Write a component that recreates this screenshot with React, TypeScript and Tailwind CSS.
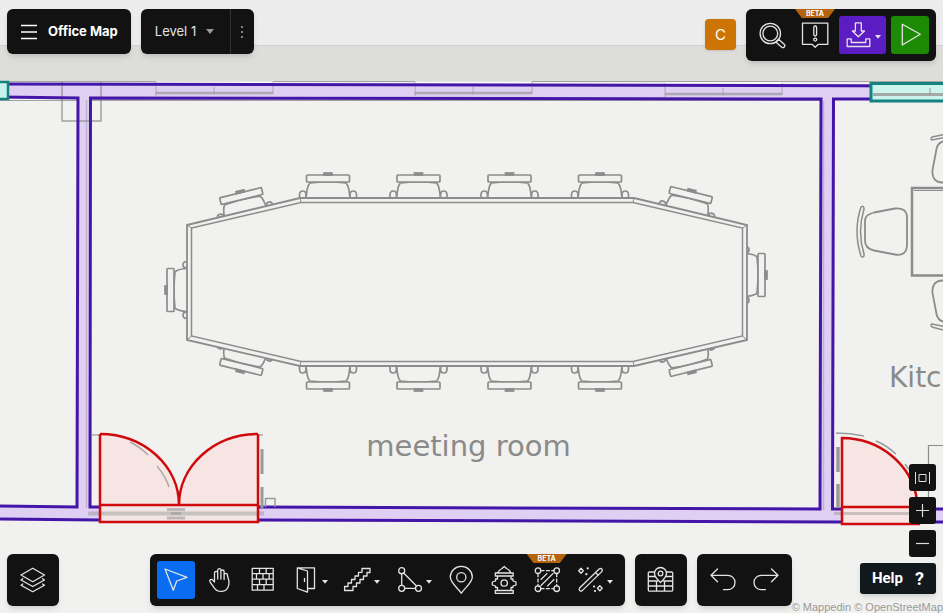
import type { ReactNode } from "react";

const panel = "bg-[#121212] rounded-md shadow-md";

function Icon({ children }: { children: ReactNode }) {
  return (
    <svg
      viewBox="0 0 26 26"
      className="w-[26px] h-[26px] shrink-0 overflow-visible"
      fill="none"
      stroke="currentColor"
      strokeWidth="1.3"
      strokeLinejoin="round"
      strokeLinecap="round"
      aria-hidden="true"
    >
      {children}
    </svg>
  );
}

function Caret() {
  return (
    <svg viewBox="0 0 6 4" className="w-[6px] h-[4px] shrink-0 mt-1" fill="currentColor" aria-hidden="true">
      <path d="M0 0h6L3 3.8z" />
    </svg>
  );
}

function Tool({ label, children, menu, beta, tone = "hover:bg-neutral-800" }: {
  label: string;
  children: ReactNode;
  menu?: boolean;
  beta?: boolean;
  tone?: string;
}) {
  return (
    <button
      type="button"
      aria-label={label}
      className={`relative h-[38px] px-[6px] flex items-center gap-1 rounded-[3px] text-[#e4e4e4] ${menu ? "w-[47px]" : "w-[38px]"} ${tone}`}
    >
      {beta && (
        <span className="absolute -top-[7px] -left-px w-10 h-[9px] bg-[#b4630c] text-white text-[7px] leading-[9px] font-bold text-center [clip-path:polygon(0_0,100%_0,83%_100%,17%_100%)]">
          BETA
        </span>
      )}
      <Icon>{children}</Icon>
      {menu && <Caret />}
    </button>
  );
}

// Origin is the middle of the table edge the chair faces
function Chair({ x, y, turn = 0 }: { x: number; y: number; turn?: number }) {
  return (
    <g transform={`translate(${x} ${y}) rotate(${turn})`} strokeWidth="1.7">
      <path d="M-22 0c1-7 1-13 4-15q18-2 36 0c3 2 3 8 4 15" />
      <path d="M-28.500 0v-3q0-4 3.200-4t3.200 3v4M28.500 0v-3q0-4-3.200-4t-3.200 3v4" />
      <rect x="-21.5" y="-23" width="43" height="7" rx="1" />
      <rect x="-4" y="-25" width="8" height="2" fill="#8c8c8c" />
    </g>
  );
}

function Window({ x, y }: { x: number; y: number }) {
  return (
    <g stroke="#999" strokeOpacity="0.7" fill="none">
      <path d={`M${x} ${y}h117`} stroke="#fff" strokeWidth="2" />
      <path d={`M${x} ${y}v14M${x + 58} ${y + 5}v8M${x + 117} ${y}v12`} strokeWidth="1" />
      <path d={`M${x} ${y + 11}h117`} strokeWidth="2.500" />
    </g>
  );
}

function FloorPlan() {
  return (
    <svg
      viewBox="0 0 943 613"
      preserveAspectRatio="xMidYMid slice"
      className="absolute inset-0 w-full h-full"
      role="img"
      aria-label="Floor plan"
    >
      <rect width="943" height="613" fill="#f1f1ef" />
      <rect width="943" height="46" fill="#ececec" />
      <path d="M0 45H943V82H0z" fill="#dddeda" />
      <path d="M0 45.500H943" stroke="#d2d2d0" />
      <path d="M0 81.500H943" stroke="#a3a3a3" />

      {/* walls */}
      <path
        fillRule="evenodd"
        fill="#decff3"
        d="M-4 84L947 86V522L-4 519zM-4 97L78 98 77 507-4 506zM90.500 98L821 99 820 509 90 507zM833.500 99H947V509H832.500z"
      />
      <g stroke="#8d8d8d" fill="none">
        <path d="M62 82V121H101V82" strokeOpacity="0.8" strokeWidth="1.500" />
        <path d="M0 100.500H77M92 100.500H820" strokeOpacity="0.8" />
        <path d="M86.500 100V508M823.500 101V510" strokeOpacity="0.4" strokeWidth="1.500" />
      </g>
      <Window x={156} y={82} />
      <Window x={415} y={82} />
      <Window x={665} y={83} />
      <g fill="none" stroke="#4416a8" strokeWidth="3">
        <path d="M-4 84L947 86M-4 519L100 520M258 520L842 522M918 522H947" />
        <path d="M-4 97L78 98 77 507-4 506" />
        <path d="M100 507H90L90.500 98 821 99 820 509 258 507" />
        <path d="M842 509H832.500L833.500 99H947M918 509H947" />
      </g>
      <rect x="-6" y="82" width="14" height="17" fill="#c7f1ec" stroke="#16827f" strokeWidth="2.500" />
      <rect x="871" y="83.500" width="90" height="17.500" fill="#cdf3ed" stroke="#16827f" strokeWidth="3" />
      <path d="M873 94.500H943" stroke="#a3a9a7" strokeWidth="3" />
      <path d="M930 88V95" stroke="#999" />

      {/* meeting table */}
      <g fill="#f1f1ef" stroke="#8c8c8c">
        {[328, 418.5, 509.5, 600].map((x) => (
          <g key={x}>
            <Chair x={x} y={198} />
            <Chair x={x} y={366} turn={180} />
          </g>
        ))}
        <Chair x={246} y={215} turn={-14} />
        <Chair x={686} y={214} turn={14} />
        <Chair x={246} y={348} turn={194} />
        <Chair x={686} y={349} turn={166} />
        <Chair x={190} y={290} turn={-90} />
        <Chair x={742} y={275} turn={90} />
        <path d="M187 225L300 198H634L747 225V340L634 366H300L187 340z" strokeWidth="1.800" />
        <path d="M191.500 228L301 202.500H633L742.500 228V336L633 361.500H301L191.500 336z" strokeWidth="1.500" />
        <path d="M187 225l4.500 3M300 198l1 4M634 198l-1 4M747 225l-4.500 3M747 340l-4.500-4M634 366l-1-5M300 366l1-5M187 340l4.500-4" />
      </g>
      <text x="468.500" y="456" textAnchor="middle" fontSize="29" fill="#8a8a8a" fontFamily="'DejaVu Sans', sans-serif">
        meeting room
      </text>

      {/* kitchen */}
      <g fill="none" stroke="#8c8c8c" strokeWidth="1.800">
        <path d="M947 188H912V275.500H947" strokeWidth="2.500" />
        <path d="M914 190.500H947" strokeWidth="1" />
        <path d="M870 214q2-1 4-1.500l21-4q12-1 12 9v27q0 12-12 10l-21-4q-9-2-9-10v-19q0-6 5-7.500z" />
        <path d="M861 207q-8 24 0 49 1 2 3 0v-2q-7-22 0-45 0-4-3-2z" strokeWidth="1.500" />
        <path d="M947 141q-9 0-10.500 8l-4 21q-1 12 10 12.500h5M947 322q-9 0-10.500-8l-4-21q-1-12 10-12.500h5" />
        <path d="M947 134l-15 3q-2 2 0 3l15-3M947 331l-15-4q-2-2 0-3l15 3" strokeWidth="1.500" />
        <path d="M928.500 509V445.500H947" strokeWidth="1.200" />
      </g>
      <text x="889" y="387" fontSize="28" fill="#8a8a8a" fontFamily="'DejaVu Sans', sans-serif">
        Kitc
      </text>

      {/* double door */}
      <path d="M100 434A79 71 0 0 1 179 505A79 71 0 0 1 258 434V505H100z" fill="#f7e5e3" />
      <rect x="100" y="505" width="158" height="17" fill="#f2e6e4" />
      <g fill="none" stroke="#9a9a9a">
        <path d="M92 435h8M258 435h5M130 442q10 5 18 13M157 466q9 11 12 21" strokeOpacity="0.8" strokeWidth="1.500" />
        <path d="M88 513.500H264" strokeWidth="4" strokeOpacity="0.5" />
        <path d="M167 509.500h18M167 518h18M171 513.500h10" strokeWidth="3" strokeOpacity="0.6" />
        <path d="M262 449V474M262 487V508" strokeWidth="3" />
        <path d="M265.500 507V498.500H275V507" strokeWidth="1.500" />
      </g>
      <g fill="none" stroke="#d0090d" strokeWidth="2.500">
        <path d="M100 434V522H258V434M100 505H258" />
        <path d="M100 434A79 71 0 0 1 179 505A79 71 0 0 1 258 434" />
      </g>

      {/* kitchen door */}
      <path d="M842 438A76 72 0 0 1 918 507V523H842z" fill="#f7e5e3" />
      <g fill="none" stroke="#9a9a9a">
        <path d="M836 433q14 0 28 3M876 441q10 4 20 13M905 464l8 11" strokeWidth="1.500" />
        <path d="M838 447V472M838 484V508" strokeWidth="3.500" />
        <path d="M834 513.500H918" strokeWidth="3" strokeOpacity="0.5" />
      </g>
      <g fill="none" stroke="#d0090d" strokeWidth="2.500">
        <path d="M920 524H842V438A76 72 0 0 1 917 500M842 507H918" />
      </g>
    </svg>
  );
}

function Header() {
  return (
    <header className="relative flex items-start justify-between px-[7px] pt-[9px]">
      <div className="flex gap-[10px]">
        <button
          type="button"
          className={`${panel} h-[45px] pl-[14px] pr-[13px] flex items-center gap-[11px] text-[13px] font-bold text-white whitespace-nowrap`}
        >
          <svg viewBox="0 0 16 16" className="w-4 h-4" stroke="currentColor" strokeWidth="1.500" aria-hidden="true">
            <path d="M0 1.500H16M0 8H16M0 14.500H16" />
          </svg>
          Office Map
        </button>
        <div className={`${panel} h-[45px] flex items-stretch text-[#e2e2e2]`}>
          <label className="relative w-[89px] flex items-center">
            <select aria-label="Level" className="appearance-none bg-transparent w-full h-full pl-[14px] text-[13px] outline-none">
              <option>Level 1</option>
            </select>
            <svg viewBox="0 0 8 5" className="absolute right-4 w-2 h-[5px] pointer-events-none" fill="#999" aria-hidden="true">
              <path d="M0 0h8L4 5z" />
            </svg>
          </label>
          <button type="button" aria-label="Level options" className="w-6 flex items-center justify-center border-l border-[#333]">
            <svg viewBox="0 0 4 14" className="w-1 h-[14px]" fill="#aaa" aria-hidden="true">
              <circle cx="2" cy="2" r="1" />
              <circle cx="2" cy="7" r="1" />
              <circle cx="2" cy="12" r="1" />
            </svg>
          </button>
        </div>
      </div>

      <div className="flex gap-[10px]">
        <button
          type="button"
          aria-label="Account C"
          className="mt-[10px] w-[31px] h-[31px] rounded bg-[#cc7404] shadow text-white text-[15px] leading-none"
        >
          C
        </button>
        <div className={`${panel} flex gap-[5px] p-[7px]`}>
          <Tool label="Search">
            <circle cx="11.3" cy="11.500" r="10.2" />
            <circle cx="11.3" cy="11.500" r="7.400" />
            <path d="M16.800 20l2.700-2.800 6 5.300q1 1.300-.2 2.500t-2.500.3z" />
          </Tool>
          <Tool label="Feedback" beta>
            <path d="M.5 1.200H25.800V22.300H16.300L13.200 25.200 10 22.300H.5z" />
            <rect x="11.800" y="4" width="2.800" height="10" rx="1.400" />
            <circle cx="13.200" cy="17.600" r="1.500" />
          </Tool>
          <Tool label="Export" menu tone="bg-[#5c1cc4]">
            <path d="M10.400 .8H16.300V9H19.500L13.300 14.800 7.400 9H10.400z" />
            <path d="M2.200 16.800H6.200V20.500H20.800V16.800H24.800V24.500H2.200z" />
          </Tool>
          <Tool label="Preview" tone="bg-[#1d8a05]">
            <path d="M5.300 2.200L23.300 12.300 5.300 23z" />
          </Tool>
        </div>
      </div>
    </header>
  );
}

function Toolbar() {
  return (
    <div className={`${panel} flex gap-[5px] p-[7px]`}>
      <Tool label="Select" tone="bg-[#0a6cf0]">
        <path d="M2 2L24 10.300 13.700 14 10.300 23.300z" />
      </Tool>
      <Tool label="Pan">
        <path d="M8.500 15V6q0-1.600 1.600-1.600T11.700 6V12M11.700 6V3.400q0-1.700 1.600-1.700t1.600 1.700V12M14.900 4.600q0-1.600 1.600-1.600t1.600 1.600V12.500M18.100 8q0-1.600 1.600-1.600T21.300 8l1.600 6q.7 3.500-1 6.500-2 4-7 3.900-4 0-6.700-3.600L4 14.800q-.8-1.500.5-2.200t2.500.7L8.500 15" />
      </Tool>
      <Tool label="Wall">
        <path d="M3.200 1.300H24.200V23.200H3.200zM3.200 6.700H24.200M3.200 12.200H24.200M3.200 17.700H24.200M10.500 1.300V6.700M17.200 1.300V6.700M7.500 6.700V12.200M14 6.700V12.200M20.200 6.700V12.200M10.500 12.200V17.700M17.200 12.200V17.700M8.500 17.700V23.200M15 17.700V23.200" />
      </Tool>
      <Tool label="Door" menu>
        <path d="M5.300 .8H22.500V21.500H15.500M5.300 .8L15.500 4V25.200L5.300 21.500zM12.500 11.500V14.500" />
      </Tool>
      <Tool label="Stairs" menu>
        <path d="M.6 19.500H4V16H7.500V12.500H11V9H14.500V5.300H18V1.500H26V5.500H23V9H19.500V12.500H16V16H12.500V19.500H9V23.500H.6z" />
      </Tool>
      <Tool label="Area" menu>
        <circle cx="5.700" cy="3.700" r="3" />
        <circle cx="5.700" cy="21.300" r="3" />
        <circle cx="22.500" cy="21.300" r="3" />
        <path d="M5.700 6.700V18.300M8.700 21.300H19.500M7.700 6L20.500 19" />
      </Tool>
      <Tool label="Location">
        <path d="M13.300 26.300C10.500 21.500 2.300 16 2.300 10a11 10.700 0 0 1 22 0C24.300 16 16 21.500 13.300 26.300z" />
        <circle cx="13.300" cy="10.200" r="4.600" />
      </Tool>
      <Tool label="Safety">
        <path d="M6.500 6Q8 2.800 11 1.500L13.300-.5 15.500 1.500Q18.500 2.800 20 6M4.300 6H22.200V9H4.300zM6.500 9V12H4.500V14L1.300 15V18L4.500 19V20.500H6.500V23.500M20 9V12H22V14L25 15V18L22 19V20.500H20V23.500M4.300 23.500H22.200V26.300H4.300z" />
        <circle cx="13.200" cy="16" r="3.200" />
      </Tool>
      <Tool label="Zone" beta>
        <circle cx="4" cy="3.700" r="2.800" />
        <circle cx="22.700" cy="3.700" r="2.800" />
        <circle cx="4" cy="21.700" r="2.800" />
        <circle cx="22.700" cy="21.700" r="2.800" />
        <path d="M7 3.700H20M7 21.700H20M4 6.700V19M22.700 6.700V19" strokeDasharray="3 2.400" />
        <path d="M7 12.500L13 6.500M7 18.500L19 6.500M13.500 19L20 12.500" strokeWidth="1.100" />
      </Tool>
      <Tool label="Magic tools" menu>
        <path d="M2.600 21L22.400 1.800q1.500-.8 2.400.2t.2 2.400L5.200 23.600q-1.600 1-2.600 0t0-2.600zM18.500 5.500l2.800 2.700" />
        <path d="M4 1.200L6.300 3.700 4 6.200 1.700 3.700zM22.800 18.800L25.200 21.300 22.800 23.800 20.400 21.300z" />
        <path d="M10.700 1.300h.1M9.300 7.200h.1M17 19.500h.1M18 24h.1" strokeWidth="2.200" />
      </Tool>
    </div>
  );
}

function Footer() {
  const zoomButton = "w-[27px] h-[27px] rounded-[3px] bg-[#121212] text-[#ddd] flex items-center justify-center";
  return (
    <footer className="relative grid grid-cols-[1fr_auto_1fr] items-end">
      <div className="pl-[7px] pb-[7px]">
        <div className={`${panel} w-[52px] p-[7px]`}>
          <Tool label="Layers">
            <path d="M12.700 1.200L24.500 8 12.700 14.700 1 8z" />
            <path d="M2.800 11.800L1 13 12.700 19.500 24.500 13 22.600 11.800M2.800 17L1 18.200 12.700 24.700 24.500 18.200 22.600 17" />
          </Tool>
        </div>
      </div>

      <div className="flex gap-[10px] pb-[7px]">
        <Toolbar />
        <div className={`${panel} p-[7px]`}>
          <Tool label="Map location">
            <path d="M6.500 5H1.500Q.3 5 .3 6V23Q.3 24.200 1.500 24.200H23.500Q24.700 24.200 24.700 23V6Q24.700 5 23.500 5H18.500M.3 9.500H7M18 9.500H24.700M.3 14H9.500M15.500 14H24.700M.3 19H24.700M8.500 14V24.200M16.500 14V24.200" />
            <path d="M12.500 15.500Q6.500 10 6.500 6.500a6 6 0 0 1 12 0Q18.500 10 12.500 15.500z" />
            <circle cx="12.500" cy="6.500" r="2.300" />
          </Tool>
        </div>
        <div className={`${panel} flex gap-[5px] p-[7px]`}>
          <Tool label="Undo">
            <path d="M7.500 2L1 8.300 7.500 14.800M1 8.300H17.800a7.200 7.200 0 0 1 0 14.400H13.500" />
          </Tool>
          <Tool label="Redo">
            <path d="M18.500 2L25 8.300 18.500 14.800M25 8.300H8.200a7.200 7.200 0 0 0 0 14.400H12.500" />
          </Tool>
        </div>
      </div>

      <div className="flex flex-col items-end">
        <div className="flex flex-col items-end gap-[6px] pr-[7px]">
          <button type="button" aria-label="Fit to view" className={zoomButton}>
            <svg viewBox="0 0 15 12" className="w-[15px] h-3" fill="none" stroke="currentColor" aria-hidden="true">
              <path d="M.5 0V12M14.500 0V12M4 2.500H11V9.500H4z" />
            </svg>
          </button>
          <button type="button" aria-label="Zoom in" className={zoomButton}>
            <svg viewBox="0 0 13 13" className="w-[13px] h-[13px]" stroke="currentColor" strokeWidth="1.200" aria-hidden="true">
              <path d="M0 6.500H13M6.500 0V13" />
            </svg>
          </button>
          <button type="button" aria-label="Zoom out" className={zoomButton}>
            <svg viewBox="0 0 13 13" className="w-[13px] h-[13px]" stroke="currentColor" strokeWidth="1.200" aria-hidden="true">
              <path d="M0 6.500H13" />
            </svg>
          </button>
          <button
            type="button"
            className="h-[31px] px-3 flex items-center gap-3 rounded-[3px] bg-[#12191c] text-white shadow-md font-['Roboto',sans-serif] font-bold text-[15px]"
          >
            Help
            <span className="text-lg leading-none">?</span>
          </button>
        </div>
        <p className="mt-[7px] h-3 text-[11px] leading-3 text-[#999] whitespace-nowrap font-['Liberation_Sans',Arial,sans-serif]">
          © <a href="#mappedin">Mappedin</a> © <a href="#openstreetmap">OpenStreetMap</a>
        </p>
      </div>
    </footer>
  );
}

export default function App() {
  return (
    <main className="relative min-h-screen overflow-hidden flex flex-col justify-between bg-[#f1f1ef] font-['Inter',sans-serif]">
      <FloorPlan />
      <Header />
      <Footer />
    </main>
  );
}
